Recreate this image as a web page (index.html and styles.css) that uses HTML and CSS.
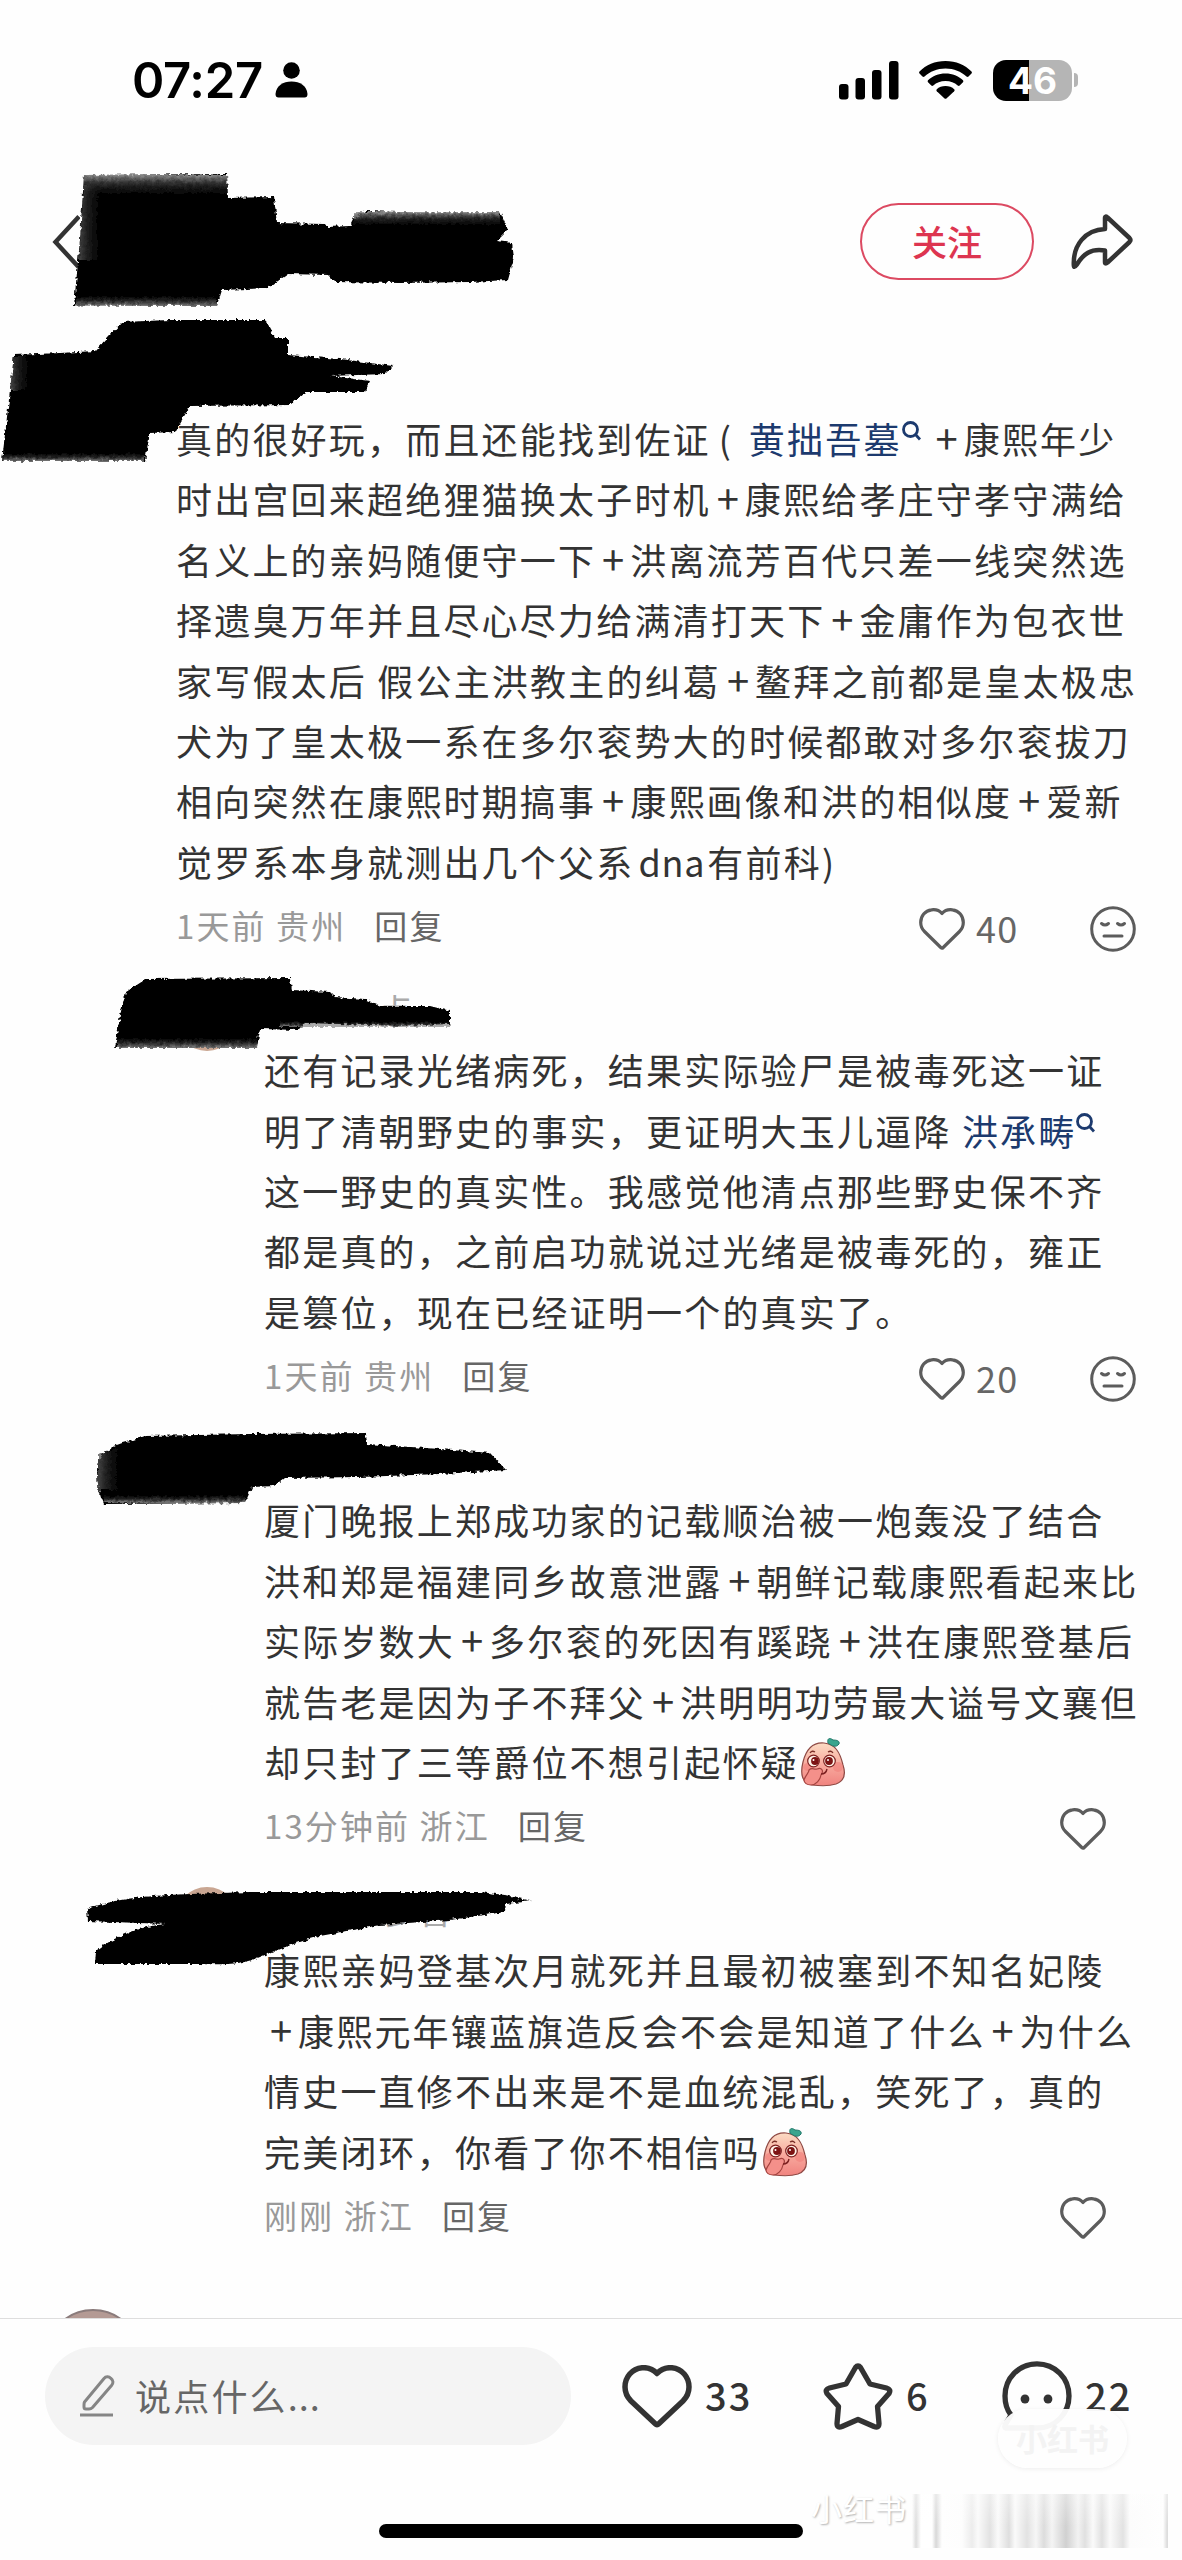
FILE: index.html
```html
<!DOCTYPE html>
<html lang="zh-CN">
<head>
    <meta charset="UTF-8">
    <meta name="viewport" content="width=device-width, initial-scale=1.0">
    <title>评论</title>
    <link rel="stylesheet" href="styles.css">
</head>
<body>
    <!-- 公用图标 -->
    <svg class="defs" width="0" height="0">
        <symbol id="heart" viewBox="0 0 46 42">
            <path d="M23 5.5C19.500 1.500 14.500 1.500 12.500 1.800C6 2.600 1.700 8 1.700 14.500C1.700 18.500 3 21 5.500 23.500L21.800 39.500Q23 40.700 24.200 39.500L40.500 23.500C43 21 44.300 18.500 44.300 14.500C44.300 8 40 2.600 33.500 1.800C31.500 1.500 26.500 1.500 23 5.500Z" fill="none" stroke="currentColor" stroke-width="3.200" stroke-linejoin="round"/>
        </symbol>
        <symbol id="face" viewBox="0 0 46 46">
            <g fill="none" stroke="currentColor" stroke-width="3" stroke-linecap="round">
                <circle cx="23" cy="23" r="21.300"/>
                <path d="M11.500 17.500Q15 20.500 18.500 17.500M27.500 17.500Q31 20.500 34.500 17.500M14 30H32"/>
            </g>
        </symbol>
        <symbol id="search" viewBox="0 0 19 20">
            <g fill="none" stroke="currentColor" stroke-width="2.800">
                <circle cx="8.500" cy="8.500" r="7"/>
                <path d="M13.500 13.500L18 18.500"/>
            </g>
        </symbol>
        <symbol id="peach" viewBox="0 0 46 50">
            <path d="M24 6C12 5 6 13 3 25C0 37 2 46 12 48C20 49 30 49 36 47C44 44 46 37 43 28C40 15 35 7 24 6Z" fill="url(#peachFill)" stroke="#8f4a45" stroke-width="1.200"/>
            <ellipse cx="8" cy="30" rx="5" ry="4" fill="#f0807c" opacity=".6"/>
            <ellipse cx="38" cy="30" rx="5" ry="5" fill="#f0807c" opacity=".6"/>
            <path d="M28 6C27 2 29 0 33 3C37 3 40 4 39 7C36 11 32 9 28 6Z" fill="#3aa58e" stroke="#23786a"/>
            <path d="M10 16Q12 13 15 15M28 15Q31 13 33 16" fill="none" stroke="#7b2f28" stroke-width="1.300"/>
            <circle cx="13.500" cy="24" r="5.800" fill="#fff3e8" stroke="#7b2020" stroke-width="1.200"/>
            <circle cx="29.500" cy="24" r="5.800" fill="#fff3e8" stroke="#7b2020" stroke-width="1.200"/>
            <circle cx="15" cy="24" r="3.900" fill="#7d1414"/>
            <circle cx="29" cy="24" r="3.900" fill="#7d1414"/>
            <circle cx="13.500" cy="23" r="1" fill="#fff"/>
            <circle cx="28" cy="23" r="1" fill="#fff"/>
            <path d="M4 43C6 37 9 36 9 33C12 30 14 33 17 32C22 30 24 34 21 38C20 43 16 48 11 48C7 48 4 46 4 43Z" fill="#f4908a" stroke="#a5433f" stroke-width="1.200"/>
            <path d="M21 37Q26 37 27 32" fill="none" stroke="#7b2020" stroke-width="1.400"/>
        </symbol>
        <linearGradient id="peachFill" x1="0" y1="0" x2="0" y2="1">
            <stop offset="0" stop-color="#fbdcc4"/>
            <stop offset=".5" stop-color="#f8aa9e"/>
            <stop offset="1" stop-color="#f0837f"/>
        </linearGradient>
    </svg>

    <div class="page">
        <div class="status-bar">
            <span class="time">07:27</span>
            <svg class="person" width="33" height="36" viewBox="0 0 33 36">
                <circle cx="16.500" cy="8.500" r="8.300"/>
                <path d="M0.500 32C1 24 8 19.500 16.500 19.500S32 24 32.500 32Q32.500 35.500 29.500 35.500H3.500Q0.500 35.500 0.500 32Z"/>
            </svg>
            <div class="status-icons">
                <svg width="60" height="39" viewBox="0 0 60 39">
                    <rect x="0" y="23" width="9.500" height="15.500" rx="3"/>
                    <rect x="16.500" y="17" width="9.500" height="21.500" rx="3"/>
                    <rect x="33" y="9" width="9.500" height="29.500" rx="3"/>
                    <rect x="50" y="0" width="9.500" height="38.500" rx="3"/>
                </svg>
                <svg class="wifi" width="53" height="38" viewBox="0 0 53 38">
                    <path d="M26.500 0C37 0 46 4 52.500 10.500Q53.300 11.500 52.500 12.500L49.500 15.500Q48.500 16.300 47.500 15.500C42 10.500 35 7.500 26.500 7.500S11 10.500 5.500 15.500Q4.500 16.300 3.500 15.500L0.500 12.500Q-.3 11.500 .5 10.500C7 4 16 0 26.500 0Z"/>
                    <path d="M26.500 12.500C33.500 12.500 39.500 15 44 19.300Q44.800 20.200 44 21.200L40.700 24.500Q39.700 25.300 38.700 24.500C35.500 21.700 31.500 20 26.500 20S17.500 21.700 14.300 24.500Q13.300 25.300 12.300 24.500L9 21.200Q8.200 20.200 9 19.300C13.500 15 19.500 12.500 26.500 12.500Z"/>
                    <path d="M26.500 25C30 25 33 26.200 35.200 28.200Q36 29.200 35.200 30.200L27.700 37.300Q26.500 38.300 25.300 37.300L17.800 30.200Q17 29.200 17.800 28.200C20 26.200 23 25 26.500 25Z"/>
                </svg>
                <div class="battery">46</div>
                <div class="battery-tip"></div>
            </div>
        </div>

        <div class="nav">
            <svg width="28" height="56" viewBox="0 0 28 56" fill="none" stroke="#333" stroke-width="4.500">
                <path d="M27 2.500L3.500 28L27 53.500"/>
            </svg>
            <button class="follow">关注</button>
            <svg class="share" width="62" height="56" viewBox="0 0 62 56" fill="none" stroke="#333" stroke-width="4.500" stroke-linejoin="round">
                <path d="M34 4Q34 1.500 36.500 3.500L58.500 24Q60.500 26 58.500 28L36.500 48.500Q34 50.500 34 48V36.500C20 34 12 40 5.500 51Q3 54.500 2.800 51C2 31 14 16 34 15Z"/>
            </svg>
        </div>

        <div class="comments">
            <div class="comment">
                <div class="avatar"></div>
                <div class="body">
                    <div class="name"></div>
                    <p class="text">真的很好玩，而且还能找到佐证<span class="paren">(</span><a class="link">黄拙吾墓<svg class="search"><use href="#search"/></svg></a><span class="plus after-link">+</span>康熙年少<br>
                    时出宫回来超绝狸猫换太子时机<span class="plus">+</span>康熙给孝庄守孝守满给<br>
                    名义上的亲妈随便守一下<span class="plus">+</span>洪离流芳百代只差一线突然选<br>
                    择遗臭万年并且尽心尽力给满清打天下<span class="plus">+</span>金庸作为包衣世<br>
                    家写假太后 假公主洪教主的纠葛<span class="plus">+</span>鳌拜之前都是皇太极忠<br>
                    犬为了皇太极一系在多尔衮势大的时候都敢对多尔衮拔刀<br>
                    相向突然在康熙时期搞事<span class="plus">+</span>康熙画像和洪的相似度<span class="plus">+</span>爱新<br>
                    觉罗系本身就测出几个父系<span class="latin">dna</span>有前科)</p>
                    <div class="meta">
                        <span>1天前 贵州</span><b>回复</b>
                        <div class="actions">
                            <svg class="heart"><use href="#heart"/></svg>
                            <span class="count">40</span>
                            <svg class="face"><use href="#face"/></svg>
                        </div>
                    </div>
                </div>
            </div>

            <div class="comment reply">
                <div class="avatar"></div>
                <div class="body">
                    <div class="name n1">点</div>
                    <p class="text">还有记录光绪病死，结果实际验尸是被毒死这一证<br>
                    明了清朝野史的事实，更证明大玉儿逼降 <a class="link">洪承畴<svg class="search"><use href="#search"/></svg></a><br>
                    这一野史的真实性。我感觉他清点那些野史保不齐<br>
                    都是真的，之前启功就说过光绪是被毒死的，雍正<br>
                    是篡位，现在已经证明一个的真实了。</p>
                    <div class="meta">
                        <span>1天前 贵州</span><b>回复</b>
                        <div class="actions">
                            <svg class="heart"><use href="#heart"/></svg>
                            <span class="count">20</span>
                            <svg class="face"><use href="#face"/></svg>
                        </div>
                    </div>
                </div>
            </div>

            <div class="comment reply">
                <div class="avatar"></div>
                <div class="body">
                    <div class="name"></div>
                    <p class="text">厦门晚报上郑成功家的记载顺治被一炮轰没了结合<br>
                    洪和郑是福建同乡故意泄露<span class="plus">+</span>朝鲜记载康熙看起来比<br>
                    实际岁数大<span class="plus">+</span>多尔衮的死因有蹊跷<span class="plus">+</span>洪在康熙登基后<br>
                    就告老是因为子不拜父<span class="plus">+</span>洪明明功劳最大谥号文襄但<br>
                    却只封了三等爵位不想引起怀疑<svg class="peach"><use href="#peach"/></svg></p>
                    <div class="meta">
                        <span>13分钟前 浙江</span><b>回复</b>
                        <div class="actions single">
                            <svg class="heart"><use href="#heart"/></svg>
                        </div>
                    </div>
                </div>
            </div>

            <div class="comment reply">
                <div class="avatar"></div>
                <div class="body">
                    <div class="name n3">多香</div>
                    <p class="text">康熙亲妈登基次月就死并且最初被塞到不知名妃陵<br>
                    <span class="plus">+</span>康熙元年镶蓝旗造反会不会是知道了什么<span class="plus">+</span>为什么<br>
                    情史一直修不出来是不是血统混乱，笑死了，真的<br>
                    完美闭环，你看了你不相信吗<svg class="peach"><use href="#peach"/></svg></p>
                    <div class="meta">
                        <span>刚刚 浙江</span><b>回复</b>
                        <div class="actions single">
                            <svg class="heart"><use href="#heart"/></svg>
                        </div>
                    </div>
                </div>
            </div>

            <div class="comment next">
                <div class="avatar"></div>
            </div>
        </div>

        <div class="bottom-bar">
            <div class="input-box">
                <svg width="35" height="42" viewBox="0 0 35 42" fill="none" stroke="#858585" stroke-width="3">
                    <path d="M4.500 27L24 3.500C26 1 29 1.500 31 3.500C33.500 5.500 33.500 8 31.500 10.500L12.500 32.500Q11 34 9 34H6Q4 34 4 32V30Q4 28 4.500 27Z" stroke-linejoin="round"/>
                    <path d="M0 40H33"/>
                </svg>
                <span>说点什么<i>...</i></span>
            </div>
            <div class="tool like">
                <svg width="70" height="63" viewBox="0 0 70 63" fill="none" stroke="#333" stroke-width="5.500" stroke-linejoin="round">
                    <path d="M35 8.500C29 2 23 2.500 20 2.800C10 3.800 3 12 3 22C3 28 5 32 9 36L33 58.500Q35 60.500 37 58.500L61 36C65 32 67 28 67 22C67 12 60 3.800 50 2.800C47 2.500 41 2 35 8.500Z"/>
                </svg>
                <span>33</span>
            </div>
            <div class="tool star">
                <svg width="70" height="67" viewBox="0 0 70 67" fill="none" stroke="#333" stroke-width="5.300" stroke-linejoin="round">
                    <path d="M32.500 4.500Q35 1.500 37.500 4.500L47 21L63.500 25Q68.500 26.500 66 30.500L54.500 43.500L56 60.500Q56 65.500 51 63.500L35 56.500L19 63.500Q14 65.500 14 60.500L15.500 43.500L4 30.500Q1.500 26.500 6.500 25L23 21Z"/>
                </svg>
                <span>6</span>
            </div>
            <div class="tool talk">
                <svg width="70" height="70" viewBox="0 0 70 70" fill="none" stroke="#333" stroke-width="5.300" stroke-linejoin="round">
                    <path d="M35 2.800C53 2.800 67 17 67 35S53 67 35 67H4Q1.500 66 4 62.500L9 54C5 49 3 42 3 35C3 17 17 2.800 35 2.800Z"/>
                    <ellipse cx="23" cy="38" rx="4.400" ry="4.600" fill="#333" stroke="none"/>
                    <ellipse cx="46" cy="38" rx="4.400" ry="4.600" fill="#333" stroke="none"/>
                </svg>
                <span>22</span>
                <div class="stamp">小红书</div>
            </div>
            <div class="home-line"></div>
            <div class="watermark">小红书</div>
            <div class="smear"></div>
        </div>

        <!-- 涂抹笔迹，盖在头像和昵称上 -->
        <svg class="ink" width="1182" height="2000" viewBox="0 0 1182 2000">
            <defs>
                <filter id="rough" x="-5%" y="-5%" width="110%" height="110%">
                    <feTurbulence type="fractalNoise" baseFrequency=".25" numOctaves="2" seed="4"/>
                    <feDisplacementMap in="SourceGraphic" scale="5" xChannelSelector="R" yChannelSelector="G"/>
                </filter>
                <linearGradient id="fadeDown" x1="0" y1="0" x2="0" y2="1">
                    <stop offset="0" stop-color="#999" stop-opacity=".9"/>
                    <stop offset=".3" stop-color="#444" stop-opacity=".8"/>
                    <stop offset="1" stop-color="#000" stop-opacity="0"/>
                </linearGradient>
                <linearGradient id="fadeUp" x1="0" y1="1" x2="0" y2="0">
                    <stop offset="0" stop-color="#999" stop-opacity=".8"/>
                    <stop offset="1" stop-color="#000" stop-opacity="0"/>
                </linearGradient>
                <linearGradient id="fadeRight">
                    <stop offset="0" stop-color="#555" stop-opacity=".8"/>
                    <stop offset="1" stop-color="#000" stop-opacity="0"/>
                </linearGradient>
            </defs>
            <g filter="url(#rough)">
                <path d="M84 175L227 174L228 198L274 197L277 223L325 224L327 227L350 226L354 218L366 211L430 213L500 212L508 230L497 241L512 243L514 258L508 280L470 282L400 283L335 282L328 275L288 274L268 288L222 290L217 306L150 306L74 305L80 240Z"/>
                <path d="M84 175H227V199H84Z" fill="url(#fadeDown)"/>
                <path d="M84 185L105 185L98 260L79 260Z" fill="url(#fadeRight)"/>
                <path d="M354 212H500V228H354Z" fill="url(#fadeDown)"/>
                <path d="M76 294H217V306H76Z" fill="url(#fadeUp)"/>
                <path d="M14 355L60 353L95 351L122 322L170 320L265 320L275 338L288 338L288 355L340 359L393 366L385 374L330 376L370 381L365 392L305 392L290 405L190 406L175 432L150 433L145 461L2 461Z"/>
                <path d="M14 356L34 356L28 390L10 390Z" fill="url(#fadeRight)"/>
                <path d="M4 452H144V461H3Z" fill="url(#fadeUp)"/>
                <path d="M126 992L146 979L290 978L292 990L330 992L335 997L365 999L382 1006L430 1006L450 1011L450 1024L400 1026L305 1023L298 1030L260 1029L257 1048L115 1048L120 1015Z"/>
                <path d="M117 1036H257V1048H117Z" fill="url(#fadeUp)"/>
                <path d="M280 1020H450V1027H280Z" fill="url(#fadeUp)"/>
                <path d="M97 1470Q97 1448 130 1441L145 1436L250 1434L366 1433L367 1444L440 1449L490 1453L506 1470L440 1474L360 1477L285 1478L275 1486L252 1487L245 1503L104 1504Q97 1490 97 1470Z"/>
                <path d="M98 1455L125 1445L120 1490L98 1490Z" fill="url(#fadeRight)"/>
                <path d="M104 1494H245V1503H104Z" fill="url(#fadeUp)"/>
                <path d="M87 1909Q120 1896 190 1894L250 1892L480 1892L505 1895L531 1901L506 1904L505 1912L450 1920L380 1925L320 1936Q290 1944 260 1957Q240 1966 200 1964L95 1964L96 1951Q125 1928 165 1924L88 1921Z"/>
            </g>
        </svg>
    </div>
</body>
</html>
```

FILE: styles.css
```css
/* 基础样式 */
* {
    box-sizing: border-box;
}

body {
    margin: 0;
    background: #fefefe;
    color: #333;
    font-family: "Noto Sans CJK SC", sans-serif;
}

svg {
    display: block;
    flex: none;
}

.defs {
    position: absolute;
}

.page {
    position: relative;
    display: flex;
    flex-direction: column;
    width: 1182px;
    height: 2560px;
    overflow: hidden;
}

/* 状态栏 */
.status-bar {
    display: flex;
    align-items: center;
    height: 160px;
    padding: 0 104px 0 132px;
    color: #000;
}

.time {
    width: 143px;
    font-family: Inter, sans-serif;
    font-size: 49px;
    font-weight: 600;
    letter-spacing: -.3px;
}

.status-icons {
    display: flex;
    align-items: center;
    margin-left: auto;
}

.wifi {
    margin: 0 21px 0 20px;
}

.battery {
    width: 79px;
    height: 41px;
    border-radius: 13px;
    background: linear-gradient(90deg, #000 36px, #b5b5b5 36px);
    color: #fff;
    font-family: Inter, sans-serif;
    font-size: 37px;
    font-weight: 700;
    line-height: 41px;
    text-align: center;
}

.battery-tip {
    width: 4px;
    height: 14px;
    margin-left: 2px;
    border-radius: 0 4px 4px 0;
    background: #b5b5b5;
}

/* 顶部导航 */
.nav {
    display: flex;
    align-items: center;
    height: 163px;
    padding: 0 49px 0 52px;
}

.follow {
    width: 174px;
    height: 77px;
    margin-left: auto;
    padding: 0 0 2px;
    border: 2px solid #dc4a62;
    border-radius: 39px;
    background: none;
    color: #dd3550;
    font-family: inherit;
    font-size: 35px;
    font-weight: 500;
}

.share {
    margin-left: 37px;
}

/* 评论列表 */
.comments {
    flex: 1;
    min-height: 0;
    padding-top: 5px;
    overflow: hidden;
}

.comment {
    display: flex;
    padding: 0 46px 0 45px;
}

.avatar {
    flex: none;
    width: 96px;
    height: 96px;
    margin: 31px 35px 0 0;
    border-radius: 50%;
    background: #b49a94;
}

.reply {
    padding-left: 175px;
}

.reply .avatar {
    width: 64px;
    height: 64px;
    margin: 28px 25px 0 0;
    background: #c9a692;
}

.next .avatar {
    margin-top: 60px;
    border: 2px solid #8a7b7b;
}

.body {
    flex: 1;
    min-width: 0;
}

.name {
    height: 80px;
    padding-top: 27px;
    color: #aaa;
    font-size: 34px;
    line-height: 48px;
}

.n1 {
    padding-left: 114px;
}

.n3 {
    padding-left: 120px;
}

.text {
    margin: 0;
    font-size: 36px;
    letter-spacing: 2.2px;
    line-height: 60.4px;
    white-space: nowrap;
}

.plus {
    display: inline-block;
    width: 34px;
    font-size: 40px;
    letter-spacing: 0;
    line-height: 50px;
    text-align: center;
}

.after-link {
    margin-left: 5px;
}

.paren {
    display: inline-block;
    width: 38px;
    padding-left: 8px;
}

.latin {
    margin: 0 2px 0 4px;
    letter-spacing: .8px;
}

.link {
    color: #1c3a6e;
}

.search {
    display: inline-block;
    width: 19px;
    height: 20px;
    margin: 0 4px 0 0;
    vertical-align: 13px;
}

.peach {
    display: inline-block;
    width: 46px;
    height: 50px;
    margin-left: 1px;
    vertical-align: -10px;
}

/* 时间、地区和操作 */
.meta {
    display: flex;
    align-items: center;
    height: 68px;
    color: #999;
    font-size: 33px;
    letter-spacing: 2.1px;
}

.meta b {
    margin-left: 28px;
    color: #666;
    font-weight: 400;
}

.actions {
    display: flex;
    align-items: center;
    margin: 7px 0 0 auto;
    color: #5c5c5c;
    letter-spacing: 1.2px;
}

.single {
    margin-right: 30px;
}

.heart {
    width: 46px;
    height: 42px;
}

.face {
    width: 46px;
    height: 46px;
}

.count {
    width: 125px;
    padding-left: 11px;
    font-size: 36px;
    line-height: 42px;
    padding-bottom: 4px;
    color: #666;
}

/* 底部栏 */
.bottom-bar {
    position: relative;
    display: flex;
    align-items: flex-start;
    height: 242px;
    padding: 28px 0 0 45px;
    border-top: 1px solid #dedede;
    background: #fefefe;
}

.input-box {
    display: flex;
    align-items: center;
    width: 526px;
    height: 98px;
    padding-left: 35px;
    border-radius: 49px;
    background: #f4f4f4;
    color: #666;
    font-size: 36px;
    letter-spacing: 2.2px;
}

.input-box span {
    margin: 0 0 3px 20px;
}

.input-box i {
    font-style: normal;
    letter-spacing: 1px;
}

.tool {
    position: relative;
    display: flex;
    align-items: center;
    height: 98px;
    font-size: 38px;
    font-weight: 500;
    letter-spacing: 2.2px;
}

.tool span {
    margin: 0 0 4px 13px;
}

.like {
    width: 201px;
    margin-left: 51px;
}

.star {
    width: 179px;
}

/* 圆角水印 */
.stamp {
    position: absolute;
    left: -4px;
    top: 62px;
    width: 129px;
    height: 59px;
    border-radius: 30px;
    background: rgba(254, 254, 254, .96);
    box-shadow: 0 1px 5px rgba(0, 0, 0, .07);
    color: #f3f3f3;
    font-size: 31px;
    font-weight: 700;
    letter-spacing: 0;
    line-height: 58px;
    text-align: center;
}

.home-line {
    position: absolute;
    left: 379px;
    bottom: 22px;
    width: 424px;
    height: 14px;
    border-radius: 7px;
    background: #000;
}

.watermark {
    position: absolute;
    left: 811px;
    bottom: 29px;
    color: #fff;
    font-size: 31px;
    letter-spacing: 1px;
    line-height: 46px;
    text-shadow: 1px 1px 2px rgba(0, 0, 0, .3);
}

.smear {
    position: absolute;
    left: 912px;
    bottom: 12px;
    width: 256px;
    height: 54px;
    background:
        linear-gradient(rgba(254, 254, 254, .4), rgba(254, 254, 254, 0) 60%),
        linear-gradient(90deg, #fefefe 0, #ddd 4px, #fff 9px, #fff 20px, #d8d8d8 24px, #fefefe 30px, #fdfdfd 50px, #ececec 60px, #fafafa 66px, #e2e2e2 78px, #fafafa 86px, #dedede 97px, #fafafa 103px, #e2e2e2 115px, #f6f6f6 124px, #dcdcdc 132px, #f4f4f4 140px, #d0d0d0 154px, #f2f2f2 166px, #e0e0e0 173px, #fafafa 181px, #e0e0e0 190px, #fafafa 198px, #e2e2e2 211px, #fcfcfc 218px, #fefefe 250px, #fff 251px, #ddd 255px);
}

.ink {
    position: absolute;
    left: 0;
    top: 0;
    pointer-events: none;
}
```
